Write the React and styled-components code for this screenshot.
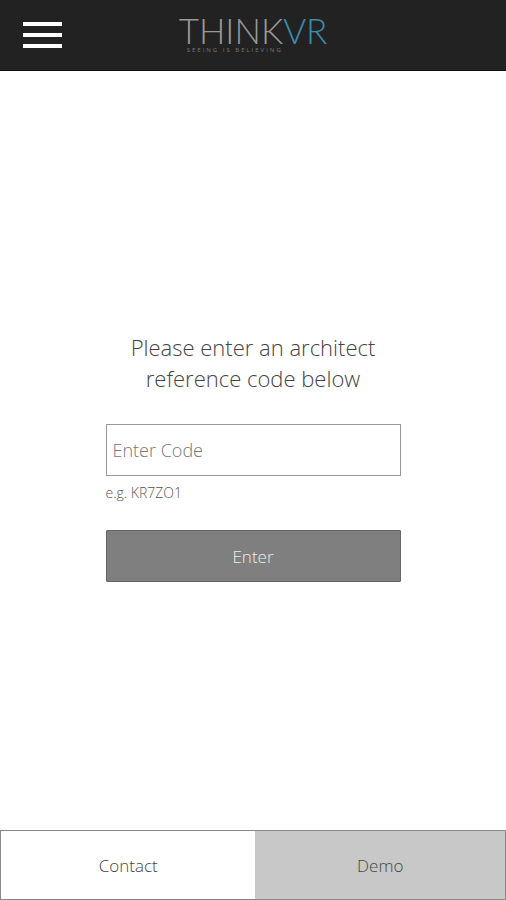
import React from 'react';
import styled, { createGlobalStyle } from 'styled-components';

const Global = createGlobalStyle`
  *, *::before, *::after { box-sizing: border-box; }
  body { margin: 0; background: #fff; font-family: "Open Sans", sans-serif; font-weight: 300; -webkit-font-smoothing: antialiased; }
`;
const Page = styled.div`
  display: flex;
  flex-direction: column;
  min-height: 100vh;
`;
const Header = styled.header`
  display: grid;
  grid-template-columns: 1fr auto 1fr;
  align-items: center;
  height: 71px;
  padding: 0 23px;
  border-bottom: 1px solid #111;
  background: #222;
`;
const MenuButton = styled.button`
  display: flex;
  flex-direction: column;
  justify-self: start;
  gap: 7px;
  padding: 0;
  border: 0;
  background: none;
  cursor: pointer;
`;
const Bar = styled.span`
  width: 39px;
  height: 4px;
  background: #fff;
`;
const Brand = styled.div`
  display: flex;
  flex-direction: column;
  color: #999;
`;
const BrandName = styled.span`
  font-family: Lato, sans-serif;
  font-weight: 300;
  font-size: 35px;
  line-height: 30px;
`;
const BrandAccent = styled.span`
  color: #3c8dad;
`;
const Tagline = styled.span`
  padding-left: 8px;
  color: #777;
  font-size: 6px;
  font-weight: 400;
  line-height: 10px;
  letter-spacing: 2px;
`;
const Main = styled.main`
  display: flex;
  flex: 1;
  align-items: center;
  justify-content: center;
  padding: 29px 16px 16px;
`;
const Form = styled.form`
  display: flex;
  flex-direction: column;
  width: 100%;
  max-width: 295px;
`;
const Prompt = styled.label`
  margin-bottom: 30px;
  color: #444;
  font-size: 22px;
  line-height: 31px;
  text-align: center;
`;
const CodeInput = styled.input`
  height: 52px;
  padding: 0 6px;
  border: 1px solid #999;
  border-radius: 0;
  color: #333;
  font: 300 18px "Open Sans", sans-serif;
  &::placeholder { color: #777; opacity: 1; }
`;
const Hint = styled.p`
  margin: 6px 0 26px;
  color: #555;
  font-size: 14px;
  line-height: 22px;
`;
const Submit = styled.button`
  height: 52px;
  border: 1px solid #666;
  border-radius: 1px;
  background: #7f7f7f;
  color: #eee;
  font: 300 17px "Open Sans", sans-serif;
`;
const Footer = styled.nav`
  display: grid;
  grid-template-columns: 51fr 50fr;
  height: 70px;
  border: 1px solid #888;
`;
const FooterLink = styled.a`
  display: flex;
  align-items: center;
  justify-content: center;
  background: ${(p) => (p.$shaded ? '#c8c8c8' : '#fff')};
  color: #444;
  font-size: 17px;
  text-decoration: none;
`;

export default function App() {
  return (
    <Page>
      <Global />
      <Header>
        <MenuButton type="button" aria-label="Menu"><Bar /><Bar /><Bar /></MenuButton>
        <Brand>
          <BrandName>THINK<BrandAccent>VR</BrandAccent></BrandName>
          <Tagline>SEEING IS BELIEVING</Tagline>
        </Brand>
      </Header>
      <Main>
        <Form onSubmit={(e) => e.preventDefault()}>
          <Prompt htmlFor="code">Please enter an architect<br />reference code below</Prompt>
          <CodeInput id="code" placeholder="Enter Code" aria-describedby="hint" />
          <Hint id="hint">e.g. KR7ZO1</Hint>
          <Submit type="submit">Enter</Submit>
        </Form>
      </Main>
      <Footer>
        <FooterLink href="#contact">Contact</FooterLink>
        <FooterLink href="#demo" $shaded>Demo</FooterLink>
      </Footer>
    </Page>
  );
}
